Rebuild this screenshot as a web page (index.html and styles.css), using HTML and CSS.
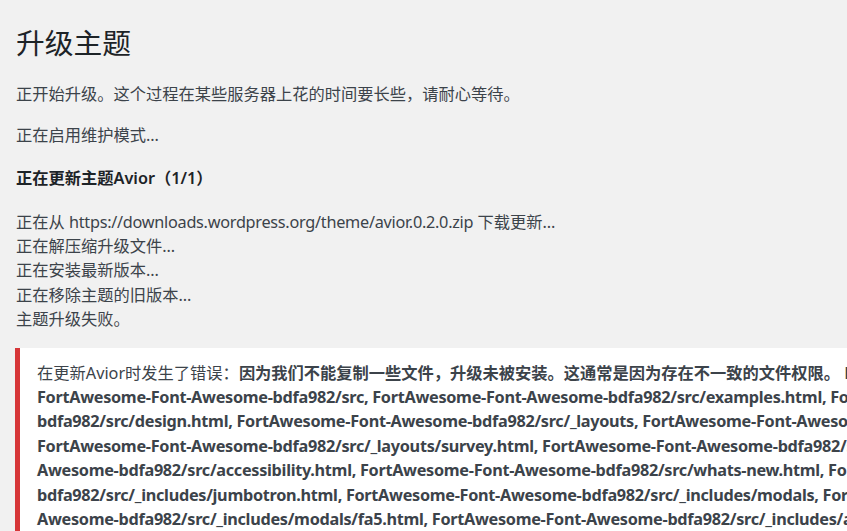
FILE: index.html
```html
<!DOCTYPE html>
<html lang="zh-CN">
<head>
<meta charset="utf-8">
<title>升级主题</title>
<link rel="stylesheet" href="styles.css">
</head>
<body>
<div class="wrap">
  <h1 class="page-title">升级主题</h1>
  <p class="para">正开始升级。这个过程在某些服务器上花的时间要长些，请耐心等待。</p>
  <p class="para">正在启用维护模式…</p>
  <h2 class="update-title">正在更新主题Avior（1/1）</h2>
  <div class="log">
    <p class="log-line">正在从 <span class="latin">https://downloads.wordpress.org/theme/avior.0.2.0.zip</span> 下载更新…</p>
    <p class="log-line">正在解压缩升级文件…</p>
    <p class="log-line">正在安装最新版本…</p>
    <p class="log-line">正在移除主题的旧版本…</p>
    <p class="log-line">主题升级失败。</p>
  </div>
  <div class="notice notice-error">
    <p class="notice-text">在更新Avior时发生了错误：<strong>因为我们不能复制一些文件，升级未被安装。这通常是因为存在不一致的文件权限。 <span class="files">FortAwesome-Font-Awesome-bdfa982,</span></strong><br><strong class="files">FortAwesome-Font-Awesome-bdfa982/src, FortAwesome-Font-Awesome-bdfa982/src/examples.html, FortAwesome-Font-Awesome-</strong><br><strong class="files">bdfa982/src/design.html, FortAwesome-Font-Awesome-bdfa982/src/_layouts, FortAwesome-Font-Awesome-bdfa982/src/_layouts/base.html,</strong><br><strong class="files">FortAwesome-Font-Awesome-bdfa982/src/_layouts/survey.html, FortAwesome-Font-Awesome-bdfa982/src/index.html, FortAwesome-Font-</strong><br><strong class="files">Awesome-bdfa982/src/accessibility.html, FortAwesome-Font-Awesome-bdfa982/src/whats-new.html, FortAwesome-Font-Awesome-</strong><br><strong class="files">bdfa982/src/_includes/jumbotron.html, FortAwesome-Font-Awesome-bdfa982/src/_includes/modals, FortAwesome-Font-Awesome-</strong><br><strong class="files">Awesome-bdfa982/src/_includes/modals/fa5.html, FortAwesome-Font-Awesome-bdfa982/src/_includes/ads/carbon.html,</strong></p>
  </div>
</div>
</body>
</html>
```
FILE: styles.css
```css
html, body {
  margin: 0;
  padding: 0;
  background: #f1f1f1;
  overflow: hidden;
}
body {
  font-family: "Noto Sans", "Noto Sans CJK SC", sans-serif;
  font-size: 16.25px;
  line-height: 1.5;
  color: #3c434a;
}
.wrap {
  padding: 12.5px 0 0 16px;
  width: 1200px;
}
.page-title {
  margin: 0;
  padding: 11px 0 5px;
  font-size: 28.75px;
  font-weight: 400;
  line-height: 1.3;
  color: #1d2327;
}
.para {
  margin: 16.25px 0;
}
.update-title {
  margin: 18.5px 0 19.5px;
  font-size: 16.25px;
  font-weight: 600;
  line-height: 1.5;
  color: #1d2327;
}
.log-line {
  margin: 0;
}
.latin {
  letter-spacing: -0.27px;
}
.log {
  margin-bottom: 17px;
}
.notice {
  background: #fff;
  border-left: 5px solid #d63638;
  padding: 1.25px 15px 1.25px 17px;
  margin-left: -1px;
  box-shadow: 0 1px 1px rgba(0,0,0,.04);
}
.notice-text {
  margin: 8.5px 0;
  padding: 2.5px 0;
  white-space: nowrap;
}
.notice-text strong {
  font-weight: 700;
}
.files {
  letter-spacing: -0.3px;
}
```
